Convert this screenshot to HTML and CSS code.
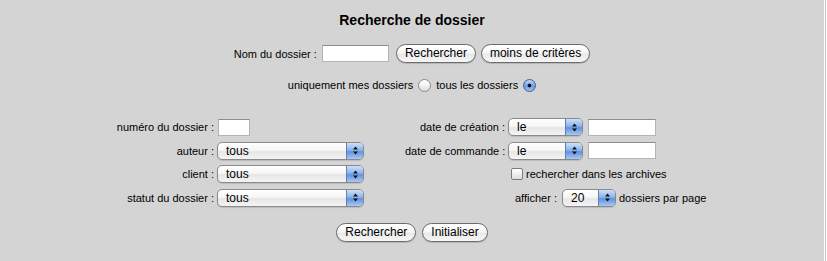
FILE: index.html
```html
<!DOCTYPE html>
<html lang="fr">
<head>
<meta charset="utf-8">
<title>Recherche de dossier</title>
<link rel="stylesheet" href="styles.css">
</head>
<body>
<div class="panel">
  <h1 class="title">Recherche de dossier</h1>
  <form class="quick">
    <label class="q-label" for="nom">Nom du dossier :</label>
    <input class="field field-name" id="nom" type="text">
    <button class="btn" type="button">Rechercher</button>
    <button class="btn" type="button">moins de critères</button>
  </form>
  <div class="scope">
    <label for="mine">uniquement mes dossiers</label>
    <input class="radio" id="mine" type="radio" name="scope">
    <label for="all">tous les dossiers</label>
    <input class="radio" id="all" type="radio" name="scope" checked>
  </div>
  <div class="criteria">
    <div class="lbl">numéro du dossier :</div>
    <div class="ctrl"><input class="field field-num" type="text"></div>
    <div class="lbl">date de création :</div>
    <div class="ctrl ctrl-r">
      <span class="sel sel-date"><select><option>le</option></select><span class="arrows"><svg width="7" height="11" viewBox="0 0 7 11"><polygon points="3.5,1.5 6,4.5 1,4.5"/><polygon points="1,6.5 6,6.5 3.5,9.5"/></svg></span></span>
      <input class="field field-date" type="text">
    </div>

    <div class="lbl">auteur :</div>
    <div class="ctrl"><span class="sel sel-wide"><select><option>tous</option></select><span class="arrows"><svg width="7" height="11" viewBox="0 0 7 11"><polygon points="3.5,1.5 6,4.5 1,4.5"/><polygon points="1,6.5 6,6.5 3.5,9.5"/></svg></span></span></div>
    <div class="lbl">date de commande :</div>
    <div class="ctrl ctrl-r">
      <span class="sel sel-date"><select><option>le</option></select><span class="arrows"><svg width="7" height="11" viewBox="0 0 7 11"><polygon points="3.5,1.5 6,4.5 1,4.5"/><polygon points="1,6.5 6,6.5 3.5,9.5"/></svg></span></span>
      <input class="field field-date" type="text">
    </div>

    <div class="lbl">client :</div>
    <div class="ctrl"><span class="sel sel-wide"><select><option>tous</option></select><span class="arrows"><svg width="7" height="11" viewBox="0 0 7 11"><polygon points="3.5,1.5 6,4.5 1,4.5"/><polygon points="1,6.5 6,6.5 3.5,9.5"/></svg></span></span></div>
    <div class="ctrl ctrl-check">
      <input class="check" id="arch" type="checkbox">
      <label for="arch">rechercher dans les archives</label>
    </div>

    <div class="lbl">statut du dossier :</div>
    <div class="ctrl"><span class="sel sel-wide"><select><option>tous</option></select><span class="arrows"><svg width="7" height="11" viewBox="0 0 7 11"><polygon points="3.5,1.5 6,4.5 1,4.5"/><polygon points="1,6.5 6,6.5 3.5,9.5"/></svg></span></span></div>
    <div class="ctrl ctrl-page">
      <span>afficher :</span>
      <span class="sel sel-page"><select><option>20</option></select><span class="arrows"><svg width="7" height="11" viewBox="0 0 7 11"><polygon points="3.5,1.5 6,4.5 1,4.5"/><polygon points="1,6.5 6,6.5 3.5,9.5"/></svg></span></span>
      <span class="after">dossiers par page</span>
    </div>
  </div>
  <div class="actions">
    <button class="btn" type="button">Rechercher</button>
    <button class="btn" type="button">Initialiser</button>
  </div>
</div>
<div class="edge"></div>
</body>
</html>
```

FILE: styles.css
```css
html, body {
  margin: 0;
  background: #fff;
}
body {
  display: flex;
  font-family: "Liberation Sans", Arial, sans-serif;
  font-size: 11px;
  color: #000;
}
.panel {
  width: 824px;
  min-height: 261px;
  background: #d4d4d4;
  text-align: center;
}
.edge {
  width: 1px;
  margin-left: 1px;
  background: #c4c4c4;
}
.title {
  margin: 0;
  padding-top: 12px;
  font-size: 14px;
  line-height: 17px;
  font-weight: bold;
}
.quick {
  margin: 15px 0 0;
  height: 19px;
  display: flex;
  justify-content: center;
  align-items: center;
}
.q-label { margin-right: 5px; }
.field {
  box-sizing: border-box;
  height: 17px;
  margin: 0;
  padding: 0 3px;
  border: 1px solid #b4b4b4;
  border-top-color: #8c8c8c;
  background: #fff;
  font: 11px "Liberation Sans", Arial, sans-serif;
}
.field-name { width: 67px; margin-right: 7px; }
.field-num { width: 32px; }
.field-date { width: 68px; }
.btn {
  box-sizing: border-box;
  height: 19px;
  margin: 0;
  padding: 0 8px;
  border: 1px solid #6c6c6c;
  border-radius: 10px;
  background: linear-gradient(#ffffff, #f7f7f7 45%, #e9e9e9 55%, #f6f6f6);
  box-shadow: 0 1px 1px rgba(0, 0, 0, 0.15);
  font: 12px "Liberation Sans", Arial, sans-serif;
  color: #000;
  line-height: 17px;
}
.quick .btn + .btn { margin-left: 5px; }
.scope {
  margin-top: 14px;
  height: 16px;
  display: flex;
  justify-content: center;
  align-items: center;
  gap: 5px;
}
.radio {
  appearance: none;
  -webkit-appearance: none;
  box-sizing: border-box;
  width: 13px;
  height: 13px;
  margin: 0;
  border: 1px solid #8a8a8a;
  border-radius: 50%;
  background: linear-gradient(#ffffff, #f2f2f2 50%, #dcdcdc);
}
.radio:checked {
  border-color: #3b5f98;
  background:
    radial-gradient(circle, #111 0 1.6px, transparent 2.2px),
    linear-gradient(#c3d8f5, #6b9be2 55%, #a0c2f1);
}
.criteria {
  margin-top: 25px;
  display: grid;
  grid-template-columns: 214px 183px 100px 1fr;
  column-gap: 4px;
  row-gap: 5.5px;
  grid-auto-rows: 18px;
  text-align: left;
}
.lbl {
  text-align: right;
  align-self: center;
  white-space: nowrap;
}
.ctrl {
  display: flex;
  align-items: center;
  gap: 5px;
}
.ctrl-r { margin-left: -1px; }
.ctrl-check {
  grid-column: 4;
  gap: 3px;
  padding-left: 2px;
}
.ctrl-page {
  grid-column: 4;
  padding-left: 6px;
}
.after { margin-left: -2px; }
.check {
  appearance: none;
  -webkit-appearance: none;
  box-sizing: border-box;
  width: 12px;
  height: 12px;
  margin: 0;
  border: 1px solid #7c7c7c;
  border-radius: 2px;
  background: linear-gradient(#ffffff, #f0f0f0 50%, #dedede);
}
.sel {
  box-sizing: border-box;
  display: inline-flex;
  height: 18px;
  border: 1px solid #8a8a8a;
  border-radius: 5px;
  overflow: hidden;
  background: linear-gradient(#ffffff, #f6f6f6 45%, #e6e6e6 55%, #f4f4f4);
  box-shadow: 0 1px 1px rgba(0, 0, 0, 0.12);
}
.sel select {
  appearance: none;
  -webkit-appearance: none;
  flex: 1;
  min-width: 0;
  margin: 0;
  padding: 0 0 0 8px;
  border: 0;
  background: transparent;
  font: 12px "Liberation Sans", Arial, sans-serif;
  color: #000;
  outline: none;
}
.arrows {
  flex: none;
  width: 16px;
  display: flex;
  align-items: center;
  justify-content: center;
  border-left: 1px solid #5d7fb6;
  background: linear-gradient(#cfe0f8, #8cb2ec 45%, #5f93e0 55%, #a9c8f3);
}
.arrows svg { fill: #111; }
.sel-wide { width: 147px; margin-left: -1px; }
.sel-date { width: 75px; }
.sel-page { width: 54px; }
.actions {
  margin-top: 16.5px;
  display: flex;
  justify-content: center;
  gap: 6px;
}
```
